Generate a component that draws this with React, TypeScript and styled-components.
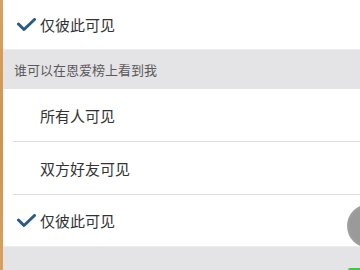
import React from 'react';
import styled, { createGlobalStyle } from 'styled-components';

const GlobalStyle = createGlobalStyle`
  html, body {
    margin: 0;
    padding: 0;
    background: #ffffff;
  }
  body {
    font-family: "Noto Sans CJK SC", "Noto Sans", sans-serif;
  }
`;

const Screen = styled.div`
  position: relative;
  width: 360px;
  height: 270px;
  overflow: hidden;
  display: flex;
  background: #ffffff;
`;

const EdgeStrip = styled.div`
  width: 3px;
  flex-shrink: 0;
  background: linear-gradient(180deg, #d9a262, #cf9350 50%, #d8a060);
`;

const List = styled.div`
  flex: 1;
  display: flex;
  flex-direction: column;
`;

const Row = styled.div<{ $h: number; $divider?: boolean }>`
  height: ${(p) => p.$h}px;
  flex-shrink: 0;
  box-sizing: border-box;
  display: flex;
  align-items: center;
  background: #ffffff;
  border-bottom: ${(p) => (p.$divider ? '1px solid #dcdcdc' : 'none')};
  margin-left: ${(p) => (p.$divider ? '10px' : '0')};
  padding-left: ${(p) => (p.$divider ? '4px' : '14px')};
`;

const CheckSlot = styled.div`
  width: 23px;
  height: 20px;
  display: flex;
  align-items: center;
  padding-top: 1px;
`;

const Label = styled.span`
  font-size: 15px;
  color: #333333;
`;

const SectionHeader = styled.div<{ $h: number }>`
  height: ${(p) => p.$h}px;
  flex-shrink: 0;
  background: #e4e3e6;
  display: flex;
  align-items: center;
  padding-left: 11px;
  font-size: 13px;
  color: #5a5a5a;
  border-top: 1px solid #ececec;
  box-sizing: border-box;
`;

const FloatButton = styled.div`
  position: absolute;
  left: 347px;
  top: 204px;
  width: 44px;
  height: 44px;
  border-radius: 50%;
  background: radial-gradient(circle at 50% 50%, #9a9a9a 60%, #b5b5b5 100%);
`;

const GreenSliver = styled.div`
  position: absolute;
  left: 348px;
  bottom: 0;
  width: 14px;
  height: 2px;
  background: #4cc04c;
  border-radius: 2px 2px 0 0;
`;

const Check = () => (
  <svg width="19" height="14" viewBox="0 0 19 14">
    <path d="M1.5 6 L7 11.5 L17.5 1.5" fill="none" stroke="#2b5b82" strokeWidth="3" strokeLinecap="round" strokeLinejoin="round" />
  </svg>
);

type Option = { label: string; checked?: boolean; h: number };

const options: Option[] = [
  { label: '所有人可见', h: 53 },
  { label: '双方好友可见', h: 53 },
  { label: '仅彼此可见', checked: true, h: 51 },
];

export default function App() {
  return (
    <>
      <GlobalStyle />
      <Screen>
        <EdgeStrip />
        <List>
          <Row $h={49}>
            <CheckSlot>
              <Check />
            </CheckSlot>
            <Label>仅彼此可见</Label>
          </Row>
          <SectionHeader $h={40}>谁可以在恩爱榜上看到我</SectionHeader>
          {options.map((o, i) => (
            <Row key={o.label} $h={o.h} $divider={i < options.length - 1}>
              <CheckSlot>{o.checked && <Check />}</CheckSlot>
              <Label>{o.label}</Label>
            </Row>
          ))}
          <SectionHeader $h={30} />
        </List>
        <FloatButton />
        <GreenSliver />
      </Screen>
    </>
  );
}
